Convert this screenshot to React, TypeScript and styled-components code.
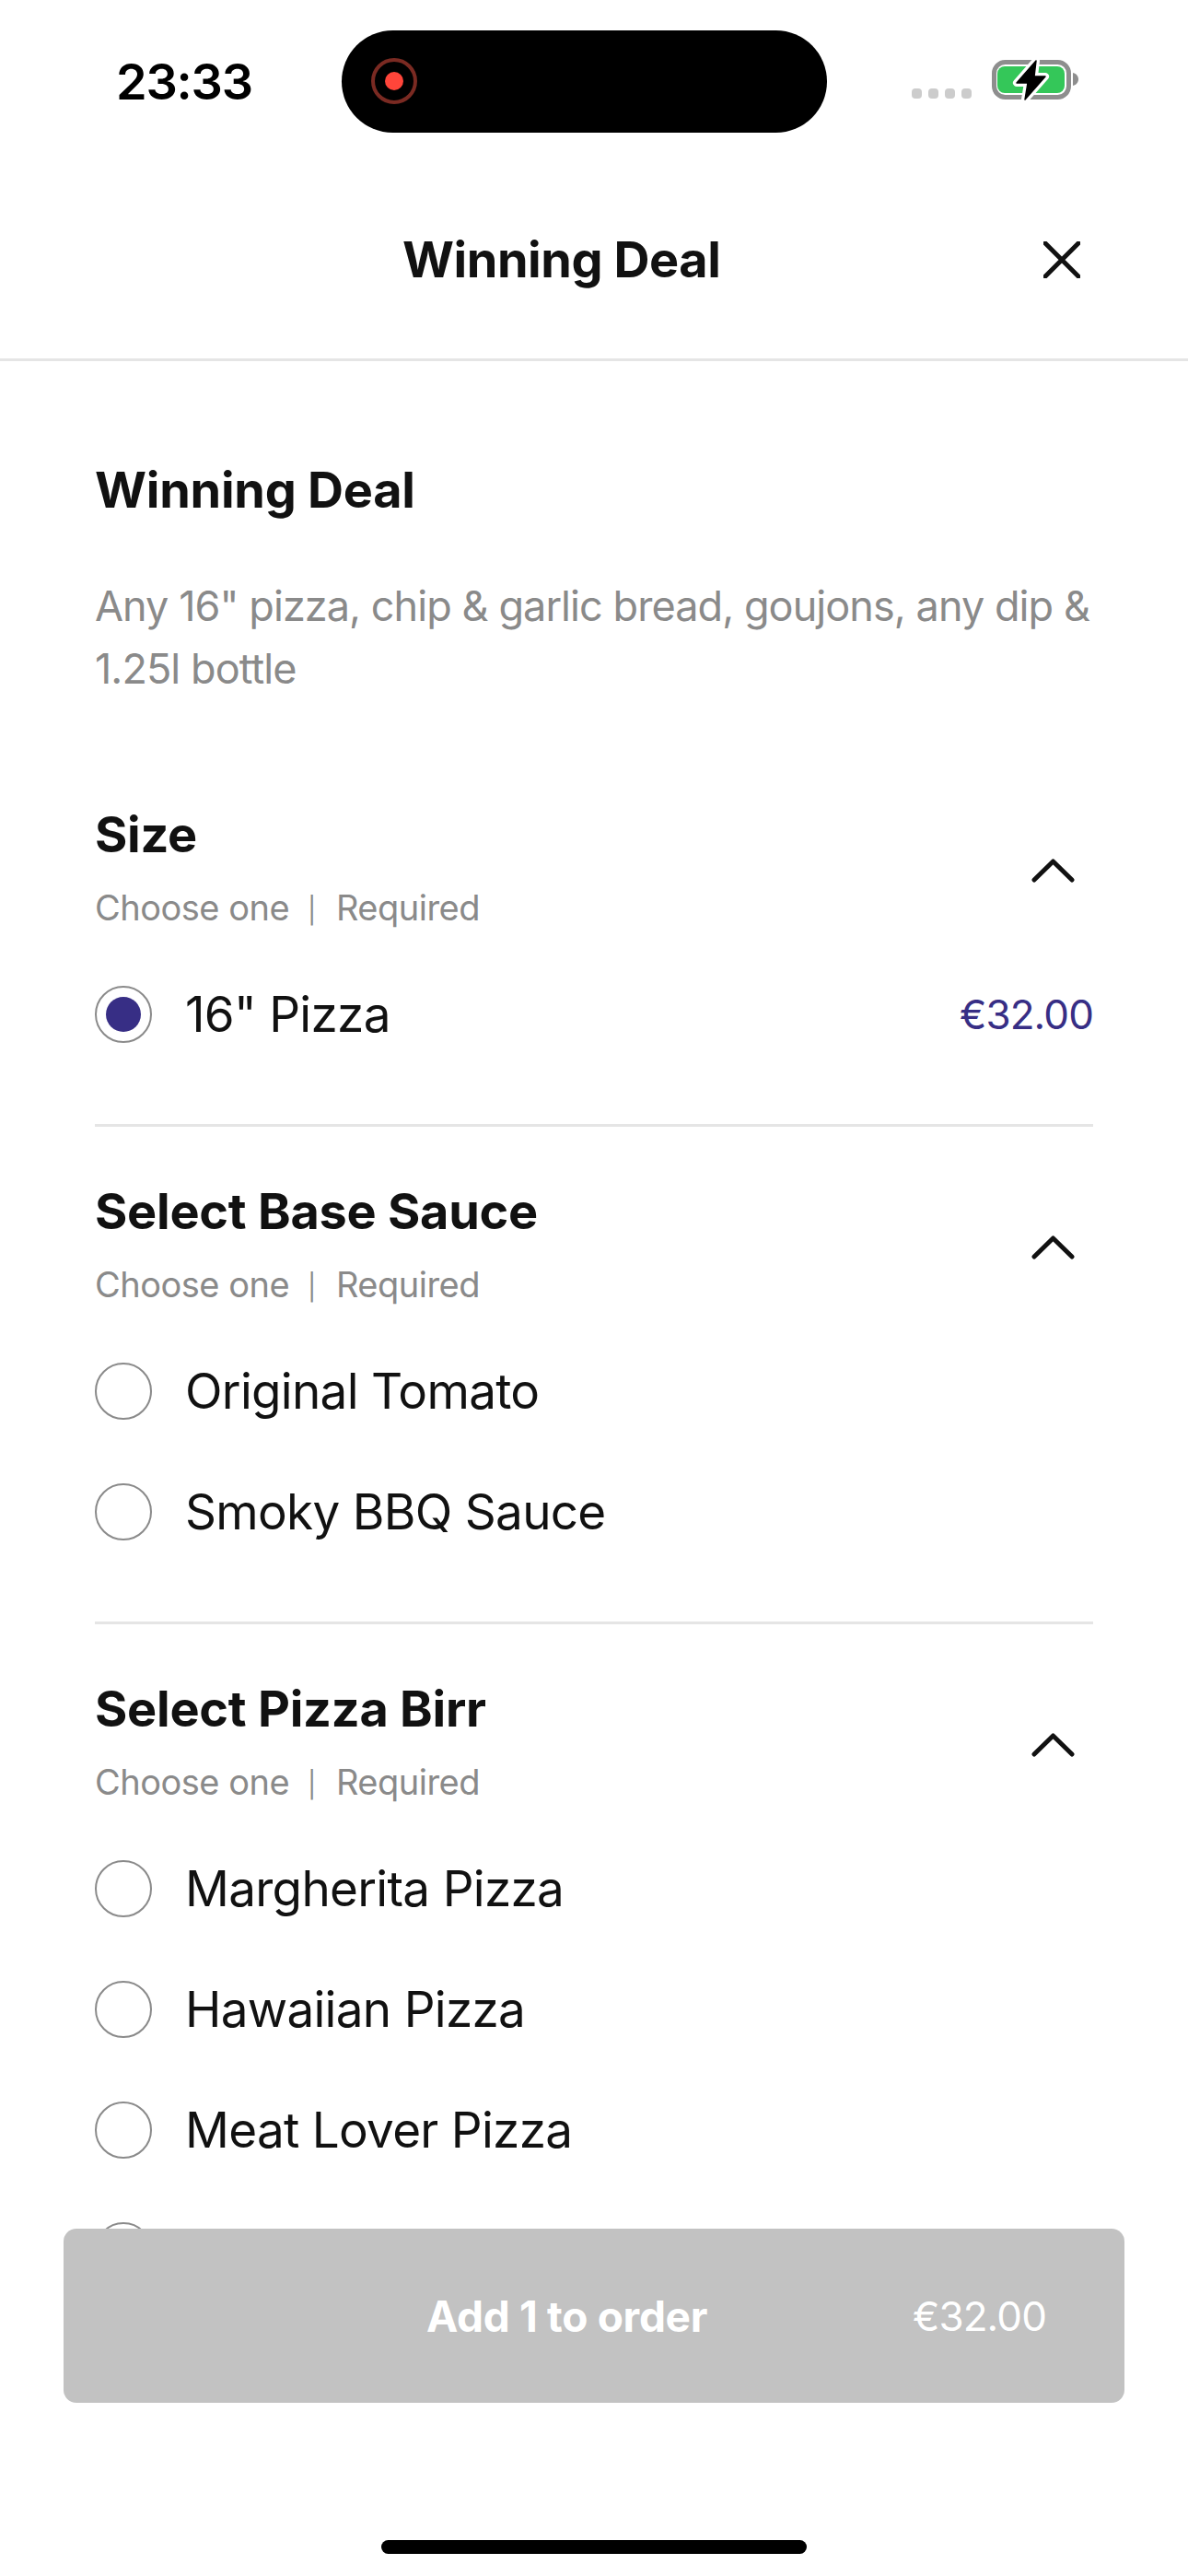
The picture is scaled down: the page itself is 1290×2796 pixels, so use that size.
import React from 'react'
import styled, { createGlobalStyle } from 'styled-components'

const GlobalStyle = createGlobalStyle`
    html, body {
        margin: 0;
        padding: 0;
        background: #ffffff;
    }
    * {
        box-sizing: border-box;
    }
`

const Page = styled.div`
    position: relative;
    width: 1290px;
    height: 2796px;
    overflow: hidden;
    background: #ffffff;
    color: #111111;
    font-family: Inter, "Liberation Sans", sans-serif;
`

const StatusBar = styled.div`
    display: flex;
    align-items: center;
    height: 176px;
    padding-left: 126px;
`

const Time = styled.div`
    width: 245px;
    font-size: 54px;
    font-weight: 600;
    color: #000000;
    letter-spacing: -1.2px;
`

const Island = styled.div`
    display: flex;
    align-items: center;
    width: 527px;
    height: 111px;
    padding-left: 32px;
    border-radius: 56px;
    background: #000000;
`

const RecordRing = styled.div`
    display: flex;
    align-items: center;
    justify-content: center;
    width: 50px;
    height: 50px;
    border: 4px solid #7a2a22;
    border-radius: 50%;
`

const RecordDot = styled.div`
    width: 20px;
    height: 20px;
    border-radius: 50%;
    background: #ff453a;
`

const SignalDots = styled.div`
    display: flex;
    gap: 7px;
    margin: 27px 22px 0 92px;
`

const SignalDot = styled.div`
    width: 11px;
    height: 11px;
    border-radius: 4px;
    background: #cccccc;
`

const BatteryIcon = styled.svg`
    margin-top: -3px;
    overflow: visible;
`

const Nav = styled.div`
    display: flex;
    align-items: center;
    height: 216px;
    padding: 0 0 2px 437px;
    border-bottom: 3px solid #e5e5e5;
`

const NavTitle = styled.div`
    width: 696px;
    font-size: 54px;
    font-weight: 700;
    line-height: 72px;
    letter-spacing: -0.45px;
`

const Content = styled.div`
    padding: 104px 103px 0;
`

const Intro = styled.div`
    padding-bottom: 54px;
`

const Title = styled.div`
    font-size: 54px;
    font-weight: 700;
    line-height: 72px;
    letter-spacing: -0.25px;
`

const Description = styled.div`
    margin-top: 56px;
    font-size: 45px;
    line-height: 68px;
    letter-spacing: -0.93px;
    color: #8a8a8a;
`

const Section = styled.div<{ $divider?: boolean }>`
    padding: 56px 0 54px;
    border-bottom: ${props => (props.$divider ? '3px solid #e5e5e5' : 'none')};
`

const SectionHead = styled.div`
    display: flex;
    align-items: center;
    justify-content: space-between;
    padding-right: 20px;
    margin-bottom: 18px;
`

const SubTitle = styled.div`
    display: flex;
    align-items: center;
    margin-top: 11px;
    font-size: 38px;
    line-height: 64px;
    letter-spacing: -0.5px;
    color: #8a8a8a;
`

const Separator = styled.span`
    margin: 6px 22px 0 20px;
    font-size: 28px;
    line-height: 34px;
`

const ChevronIcon = styled.svg`
    margin-top: 3px;
`

const Row = styled.div`
    display: flex;
    align-items: center;
    height: 131px;
`

const Radio = styled.div`
    display: flex;
    align-items: center;
    justify-content: center;
    flex-shrink: 0;
    width: 62px;
    height: 62px;
    border: 2px solid #8a8a8a;
    border-radius: 50%;
`

const RadioFill = styled.div`
    width: 38px;
    height: 38px;
    border-radius: 50%;
    background: #372e85;
`

const RowLabel = styled.div`
    margin-left: 36px;
    font-size: 53px;
    letter-spacing: -0.7px;
    color: #111111;
`

const RowPrice = styled.div`
    margin-left: auto;
    font-size: 44px;
    letter-spacing: -0.9px;
    color: #372e85;
`

const Footer = styled.div`
    position: absolute;
    left: 0;
    right: 0;
    bottom: 0;
    height: 377px;
    padding: 0 69px;
    background: #ffffff;
`

const OrderButton = styled.div`
    display: flex;
    align-items: center;
    height: 189px;
    padding: 0 85px 0 394px;
    border-radius: 14px;
    background: #c2c2c2;
    color: #ffffff;
`

const OrderLabel = styled.div`
    font-size: 46px;
    font-weight: 700;
    letter-spacing: -0.3px;
`

const OrderPrice = styled.div`
    margin-left: auto;
    font-size: 44px;
    letter-spacing: -0.9px;
`

const HomeBar = styled.div`
    width: 462px;
    height: 15px;
    margin: 149px 0 0 345px;
    border-radius: 8px;
    background: #000000;
`

const BOLT = 'M48 1 L27 25 H39 L36 43 L58 18 H46 Z'

const Battery = () => (
    <BatteryIcon width="94" height="44" viewBox="0 0 94 44" fill="none">
        <rect x="2.5" y="2.5" width="81" height="38" rx="12" stroke="#8e8e8e" strokeWidth="5" />
        <rect x="6" y="7" width="73" height="29" rx="8" fill="#34c759" />
        <path d="M88 14 C92 15 94 18 94 21 C94 24 92 27 88 28 Z" fill="#8e8e8e" />
        <path d={BOLT} fill="#ffffff" stroke="#ffffff" strokeWidth="8" strokeLinejoin="round" />
        <path d={BOLT} fill="#000000" stroke="#000000" strokeWidth="1.5" strokeLinejoin="round" />
    </BatteryIcon>
)

const CloseIcon = () => (
    <svg width="40" height="40" viewBox="0 0 40 40" fill="none">
        <path d="M2 2 L38 38 M38 2 L2 38" stroke="#111111" strokeWidth="5" strokeLinecap="round" />
    </svg>
)

const ChevronUp = () => (
    <ChevronIcon width="47" height="26" viewBox="0 0 47 26" fill="none">
        <path
            d="M3 23 L23.5 3 L44 23"
            stroke="#111111"
            strokeWidth="5"
            strokeLinecap="round"
            strokeLinejoin="round"
        />
    </ChevronIcon>
)

interface Option {
    name: string
    price?: string
    selected?: boolean
}

interface Group {
    title: string
    options: Option[]
}

const groups: Group[] = [
    { title: 'Size', options: [{ name: '16" Pizza', price: '€32.00', selected: true }] },
    { title: 'Select Base Sauce', options: [{ name: 'Original Tomato' }, { name: 'Smoky BBQ Sauce' }] },
    {
        title: 'Select Pizza Birr',
        // the fourth row is hidden behind the button apart from the top of its radio
        options: [{ name: 'Margherita Pizza' }, { name: 'Hawaiian Pizza' }, { name: 'Meat Lover Pizza' }, { name: '' }],
    },
]

const App: React.FC = () => {
    return <Page>
        <GlobalStyle />
        <StatusBar>
            <Time>23:33</Time>
            <Island>
                <RecordRing><RecordDot /></RecordRing>
            </Island>
            <SignalDots>
                {[0, 1, 2, 3].map(dot => <SignalDot key={dot} />)}
            </SignalDots>
            <Battery />
        </StatusBar>

        <Nav>
            <NavTitle>Winning Deal</NavTitle>
            <CloseIcon />
        </Nav>

        <Content>
            <Intro>
                <Title>Winning Deal</Title>
                <Description>Any 16" pizza, chip &amp; garlic bread, goujons, any dip &amp; 1.25l bottle</Description>
            </Intro>

            {groups.map((group, index) =>
                <Section key={group.title} $divider={index < groups.length - 1}>
                    <SectionHead>
                        <div>
                            <Title>{group.title}</Title>
                            <SubTitle>
                                <span>Choose one</span>
                                <Separator>|</Separator>
                                <span>Required</span>
                            </SubTitle>
                        </div>
                        <ChevronUp />
                    </SectionHead>
                    {group.options.map((option, optionIndex) =>
                        <Row key={optionIndex}>
                            <Radio>{option.selected && <RadioFill />}</Radio>
                            <RowLabel>{option.name}</RowLabel>
                            {option.price && <RowPrice>{option.price}</RowPrice>}
                        </Row>
                    )}
                </Section>
            )}
        </Content>

        <Footer>
            <OrderButton>
                <OrderLabel>Add 1 to order</OrderLabel>
                <OrderPrice>€32.00</OrderPrice>
            </OrderButton>
            <HomeBar />
        </Footer>
    </Page>
}

export default App
